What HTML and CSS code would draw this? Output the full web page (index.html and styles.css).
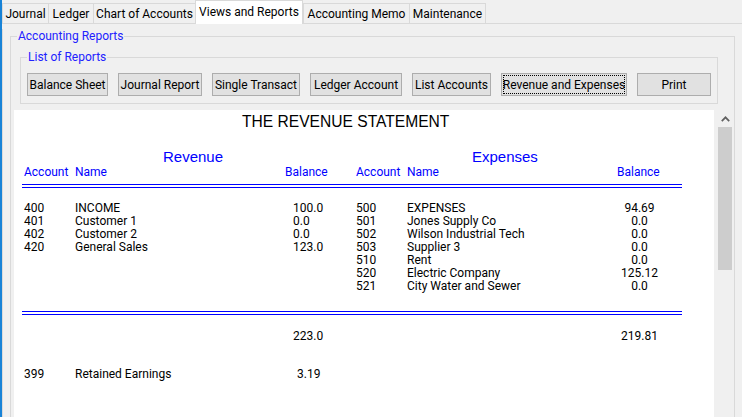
FILE: index.html
```html
<!DOCTYPE html>
<html lang="en">
<head>
<meta charset="utf-8">
<title>Views and Reports</title>
<link rel="stylesheet" href="styles.css">
</head>
<body>
<div class="window">
  <div class="tabs">
    <div class="tab t-journal">Journal</div>
    <div class="tab t-ledger">Ledger</div>
    <div class="tab t-chart">Chart of Accounts</div>
    <div class="tab tab-active t-views">Views and Reports</div>
    <div class="tab t-memo">Accounting Memo</div>
    <div class="tab tab-last t-maint">Maintenance</div>
  </div>
  <div class="panel">
    <fieldset class="group outer">
      <legend>Accounting Reports</legend>
      <fieldset class="group inner">
        <legend>List of Reports</legend>
        <div class="buttons">
          <button class="btn w-bs">Balance Sheet</button>
          <button class="btn w-jr">Journal Report</button>
          <button class="btn w-st">Single Transact</button>
          <button class="btn w-la">Ledger Account</button>
          <button class="btn w-lc">List Accounts</button>
          <button class="btn w-re focused">Revenue and Expenses</button>
          <button class="btn w-pr">Print</button>
        </div>
      </fieldset>
      <div class="scrollpane">
        <div class="viewport">
          <div class="report">
            <div class="title">THE REVENUE STATEMENT</div>
            <div class="sections">
              <div class="sec-rev">Revenue</div>
              <div class="sec-exp">Expenses</div>
            </div>
            <div class="grid head">
              <div>Account</div><div>Name</div><div>Balance</div>
              <div>Account</div><div>Name</div><div>Balance</div>
            </div>
            <div class="rule"></div>
            <div class="grid data">
              <div>400</div><div>INCOME</div><div class="bal">100.0</div>
              <div>500</div><div>EXPENSES</div><div class="ebal">94.69</div>

              <div>401</div><div>Customer 1</div><div class="bal">0.0</div>
              <div>501</div><div>Jones Supply Co</div><div class="ebal">0.0</div>

              <div>402</div><div>Customer 2</div><div class="bal">0.0</div>
              <div>502</div><div>Wilson Industrial Tech</div><div class="ebal">0.0</div>

              <div>420</div><div>General Sales</div><div class="bal">123.0</div>
              <div>503</div><div>Supplier 3</div><div class="ebal">0.0</div>

              <div></div><div></div><div></div>
              <div>510</div><div>Rent</div><div class="ebal">0.0</div>

              <div></div><div></div><div></div>
              <div>520</div><div>Electric Company</div><div class="ebal">125.12</div>

              <div></div><div></div><div></div>
              <div>521</div><div>City Water and Sewer</div><div class="ebal">0.0</div>
            </div>
            <div class="rule rule2"></div>
            <div class="grid totals">
              <div></div><div></div><div class="bal">223.0</div>
              <div></div><div></div><div class="ebal">219.81</div>
            </div>
            <div class="grid retained">
              <div>399</div><div>Retained Earnings</div><div class="bal bal-r">3.19</div>
              <div></div><div></div><div></div>
            </div>
          </div>
        </div>
        <div class="vscroll">
          <div class="arrow">
            <svg width="9" height="6" viewBox="0 0 9 6"><polyline points="0.8,5.2 4.5,1.3 8.2,5.2" fill="none" stroke="#606060" stroke-width="1.7"/></svg>
          </div>
          <div class="thumb"></div>
        </div>
      </div>
    </fieldset>
  </div>
</div>
</body>
</html>
```

FILE: styles.css
```css
* { box-sizing: border-box; }
html, body { margin: 0; padding: 0; }
body {
  width: 742px;
  height: 417px;
  overflow: hidden;
  background: #f0f0f0;
  font-family: Roboto, "Noto Sans", sans-serif;
  font-size: 12px;
  color: #000;
}
.window {
  height: 417px;
  border-left: 2px solid #1883d7;
}

/* tabs */
.tabs {
  display: flex;
  align-items: flex-end;
  height: 24px;
  border-bottom: 1px solid #d9d9d9;
}
.tab {
  height: 20px;
  padding-top: 1px;
  border: 1px solid #d9d9d9;
  border-bottom: 0;
  border-right: 0;
  line-height: 18px;
  text-align: center;
  white-space: nowrap;
  background: #f0f0f0;
}
.tab-active {
  height: 24px;
  margin-bottom: -1px;
  padding-top: 2px;
  background: #fff;
  border-right: 1px solid #d9d9d9;
}
.tab-last { border-right: 1px solid #d9d9d9; }
.t-journal { width: 46px; }
.t-ledger { width: 45px; }
.t-chart { width: 102px; }
.t-views { width: 108px; }
.t-memo { width: 106px; }
.t-maint { width: 77px; }

/* panel & groups */
.panel {
  height: 393px;
  border-left: 1px solid #dadada;
}
.group {
  margin: 0;
  padding: 0;
  min-width: 0;
  border: 1px solid #d9d9d9;
}
.group > legend {
  padding: 0 1px;
  line-height: 14px;
  color: #2222ff;
}
.outer {
  margin: 5px 0 0 7px;
  width: 725px;
  height: 400px;
  padding: 0 0 0 3px;
}
.outer > legend { margin-left: 3px; }
.inner {
  margin: 7px 16px 0 6px;
  padding: 9px 6px 7px 6px;
}

/* buttons */
.buttons {
  display: flex;
  gap: 10px;
}
.btn {
  height: 23px;
  padding: 2px 0 0 0;
  border: 1px solid #adadad;
  background: #e1e1e1;
  font: inherit;
  line-height: 19px;
  color: #000;
  white-space: nowrap;
}
.focused {
  outline: 1px dotted #000;
  outline-offset: -3px;
}
.w-bs { width: 81px; }
.w-jr { width: 84px; }
.w-st { width: 88px; }
.w-la { width: 92px; }
.w-lc { width: 79px; }
.w-re { width: 126px; }
.w-pr { width: 74px; }

/* report */
.scrollpane {
  display: flex;
  margin-top: 6px;
  height: 320px;
}
.viewport {
  width: 700px;
  background: #fff;
}
.vscroll {
  width: 17px;
  margin-left: 3px;
  background: #f0f0f0;
}
.arrow {
  height: 17px;
  display: flex;
  align-items: center;
  justify-content: center;
  padding-right: 1px;
}
.arrow svg { display: block; }
.thumb {
  height: 143px;
  margin: 0 2px 0 1px;
  background: #cdcdcd;
}

.report {
  padding: 3px 0 0 10px;
}
.title {
  font-family: "Liberation Sans", Arial, sans-serif;
  font-size: 15.6px;
  line-height: 18px;
  padding-left: 218px;
}
.sections {
  display: flex;
  margin-top: 17px;
  font-family: "Liberation Sans", Arial, sans-serif;
  font-size: 15px;
  line-height: 17px;
  color: #0000ff;
}
.sec-rev { width: 332px; padding-left: 139px; }
.sec-exp { padding-left: 116px; }

.grid {
  display: grid;
  grid-template-columns: 51px 210px 71px 51px 210px 45px;
  line-height: 13px;
  white-space: nowrap;
}
.head { margin-top: 1px; color: #0000ff; }
.rule {
  margin: 5px 0 0 -2px;
  width: 660px;
  height: 4px;
  border-top: 1px solid #0000ff;
  border-bottom: 1px solid #0000ff;
}
.data { margin-top: 14px; }
.rule2 { margin-top: 18px; }
.totals { margin-top: 15px; }
.retained { margin-top: 25px; }
.bal { padding-left: 8px; }
.bal-r { padding-left: 12px; }
.ebal { text-align: center; }
```
